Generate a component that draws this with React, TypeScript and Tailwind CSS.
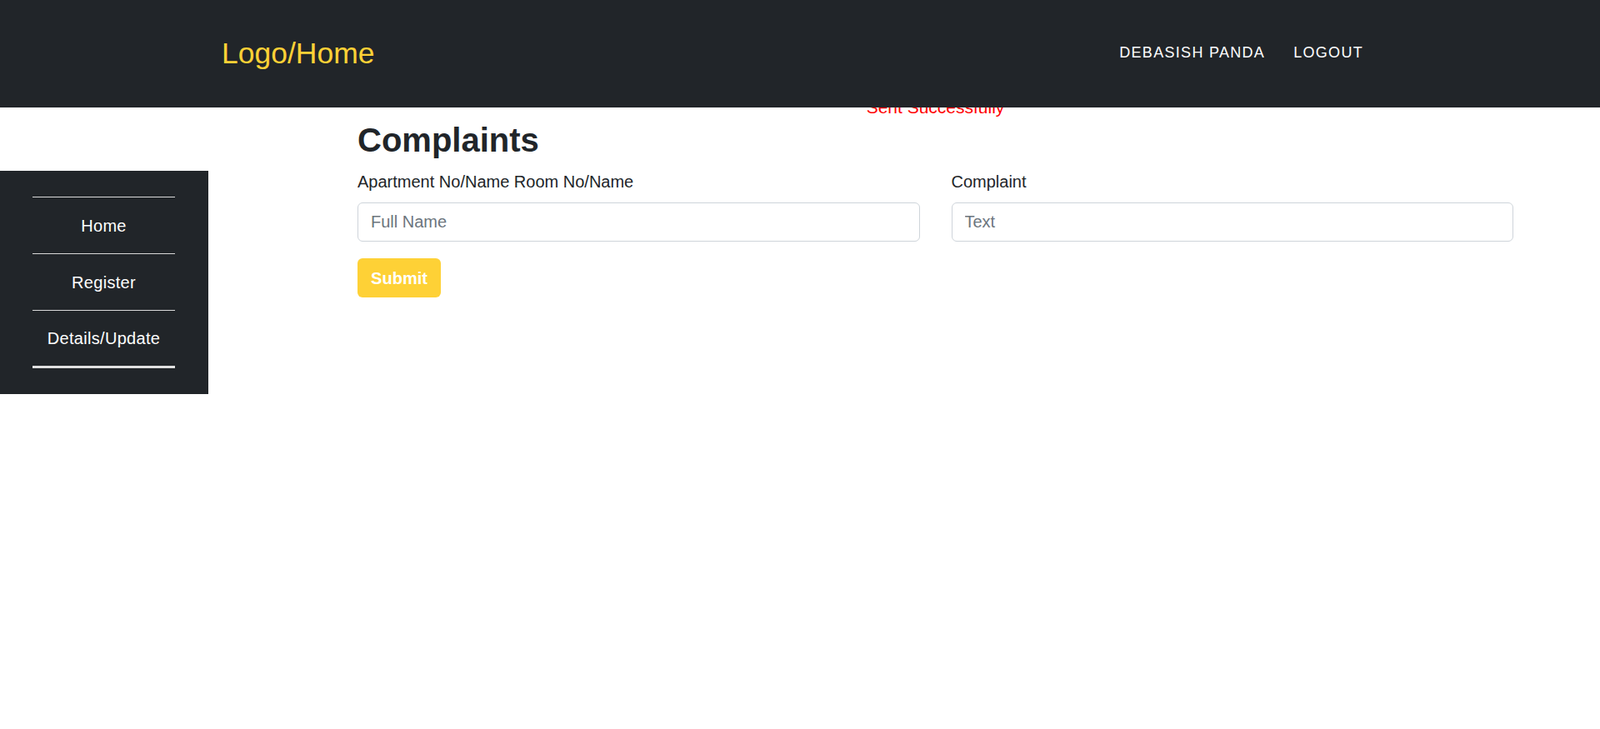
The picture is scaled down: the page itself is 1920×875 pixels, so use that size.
/**
 * Complaints Page
 *
 * Resident complaint form with top navbar and side menu.
 */

const font = { fontFamily: '"Liberation Sans", Arial, sans-serif' };

const sideLinks = ["Home", "Register", "Details/Update"];

export default function App() {
  return (
    <div className="min-h-[875px] bg-white text-[#212529]" style={font}>
      {/* Navbar */}
      <header className="relative z-10 flex h-[129px] items-center justify-between bg-[#212529] pb-[2px] pl-[266px] pr-[284px]">
        <a href="#" className="text-[35.5px] leading-[52px] text-[#fed136]">
          Logo/Home
        </a>
        <nav className="flex items-center gap-[34px] text-[18px] uppercase tracking-[1.3px] text-white">
          <a href="#">Debasish Panda</a>
          <a href="#">Logout</a>
        </nav>
      </header>

      <div className="-mt-[15px] flex">
        {/* Side menu */}
        <aside className="mt-[91px] w-[250px] shrink-0 bg-[#212529] pb-[31px] pt-[31px]">
          <ul className="mx-[39px] w-[171px] border-b-[3px] border-[#e0e0e0]">
            {sideLinks.map((label) => (
              <li
                key={label}
                className="flex h-[68px] items-center justify-center border-t border-[#d9d9d9] text-[20px] tracking-[0.3px] text-white last:h-[67px]"
              >
                <a href="#">{label}</a>
              </li>
            ))}
          </ul>
        </aside>

        {/* Complaint form */}
        <main className="ml-[179px] w-[1387px]">
          <p className="text-center text-[21px] leading-[30px] text-[#ff0000]">
            Sent Successfully
          </p>
          <h2 className="mb-[11px] text-[40px] font-bold leading-[48px]">
            Complaints
          </h2>
          <form className="grid grid-cols-2 gap-x-[38px]">
            <div>
              <label className="mb-[10px] block text-[20px] leading-[30px]">
                Apartment No/Name Room No/Name
              </label>
              <input
                type="text"
                placeholder="Full Name"
                className="block h-[47px] w-full rounded-[6px] border border-[#ced4da] px-[15px] text-[20px] text-[#212529] outline-none placeholder:text-[#6c757d]"
              />
            </div>
            <div>
              <label className="mb-[10px] block text-[20px] leading-[30px]">
                Complaint
              </label>
              <input
                type="text"
                placeholder="Text"
                className="block h-[47px] w-full rounded-[6px] border border-[#ced4da] px-[15px] text-[20px] text-[#212529] outline-none placeholder:text-[#6c757d]"
              />
            </div>
            <div className="col-span-2 mt-[20px]">
              <button
                type="button"
                className="h-[47px] w-[100px] rounded-[6px] bg-[#fed136] text-[20px] font-bold text-white"
              >
                Submit
              </button>
            </div>
          </form>
        </main>
      </div>
    </div>
  );
}
